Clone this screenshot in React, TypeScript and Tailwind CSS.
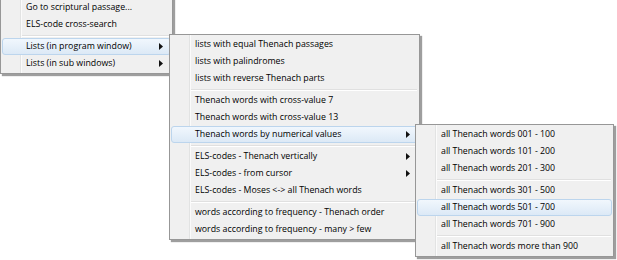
import React from 'react'

type Entry = { label: string; sub?: boolean; active?: boolean } | 'sep'

const mainMenu: Entry[] = [
  { label: 'Go to scriptural passage...' },
  { label: 'ELS-code cross-search' },
  'sep',
  { label: 'Lists (in program window)', sub: true, active: true },
  { label: 'Lists (in sub windows)', sub: true },
]

const listsMenu: Entry[] = [
  { label: 'lists with equal Thenach passages' },
  { label: 'lists with palindromes' },
  { label: 'lists with reverse Thenach parts' },
  'sep',
  { label: 'Thenach words with cross-value 7' },
  { label: 'Thenach words with cross-value 13' },
  { label: 'Thenach words by numerical values', sub: true, active: true },
  'sep',
  { label: 'ELS-codes - Thenach vertically', sub: true },
  { label: 'ELS-codes - from cursor', sub: true },
  { label: 'ELS-codes - Moses <-> all Thenach words' },
  'sep',
  { label: 'words according to frequency - Thenach order' },
  { label: 'words according to frequency - many > few' },
]

const valuesMenu: Entry[] = [
  { label: 'all Thenach words 001 - 100' },
  { label: 'all Thenach words 101 - 200' },
  { label: 'all Thenach words 201 - 300' },
  'sep',
  { label: 'all Thenach words 301 - 500' },
  { label: 'all Thenach words 501 - 700', active: true },
  { label: 'all Thenach words 701 - 900' },
  'sep',
  { label: 'all Thenach words more than 900' },
]

function Arrow() {
  return (
    <svg width="4" height="7" viewBox="0 0 4 7" className="ml-auto mr-[7px]">
      <polygon points="0,0 4,3.5 0,7" fill="#111" />
    </svg>
  )
}

function Menu({ items, className }: { items: Entry[]; className: string }) {
  return (
    <div
      className={`absolute bg-[#f0f0f0] border border-[#979797] py-[1px] shadow-[2px_2px_1px_rgba(0,0,0,0.38)] ${className}`}
    >
      {/* icon gutter */}
      <div className="absolute top-0 bottom-0 left-[19px] w-[2px] border-l border-[#e2e3e3] bg-white/70" />
      {items.map((it, i) =>
        it === 'sep' ? (
          <div key={i} className="relative h-[5px] flex items-center pl-[21px] pr-[2px]">
            <div className="w-full h-[2px] border-t border-[#e0e0e0] bg-white" />
          </div>
        ) : (
          <div
            key={i}
            className={`relative mx-[1px] h-[17px] flex items-center pl-[23px] rounded-[3px] border ${
              it.active
                ? 'border-[#bcd5ed] bg-gradient-to-b from-[#f1f7fd] to-[#dce9f6]'
                : 'border-transparent'
            }`}
          >
            <span className="whitespace-nowrap">{it.label}</span>
            {it.sub && <Arrow />}
          </div>
        ),
      )}
    </div>
  )
}

export default function App() {
  return (
    <div
      className="relative w-[617px] h-[260px] bg-white overflow-hidden text-[8.8px] text-[#000]"
      style={{ fontFamily: '"Open Sans", "Noto Sans", sans-serif' }}
    >
      <Menu items={mainMenu} className="left-0 top-[-3px] w-[173px]" />
      <Menu items={listsMenu} className="left-[169px] top-[34px] w-[251px]" />
      <Menu items={valuesMenu} className="left-[415px] top-[124px] w-[199px]" />
    </div>
  )
}
